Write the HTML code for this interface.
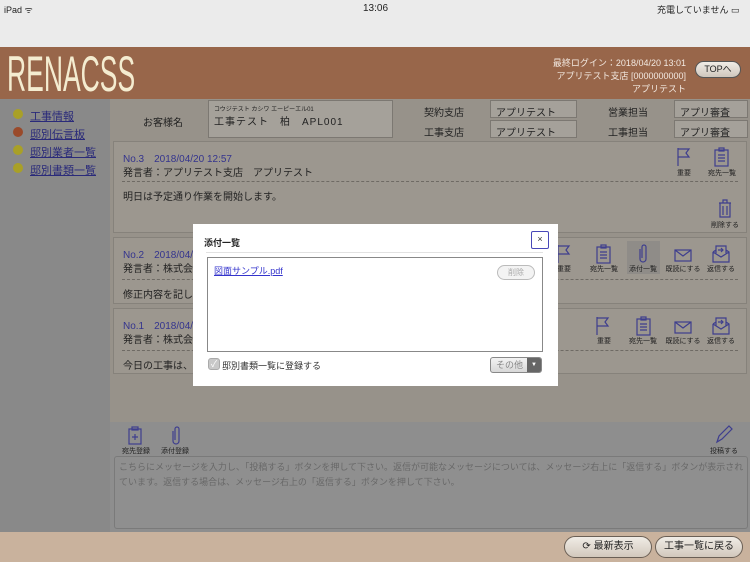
<!DOCTYPE html>
<html style="width:750px;height:562px;overflow:hidden"><head><meta charset="utf-8"><style>
*{margin:0;padding:0;box-sizing:border-box}
body{width:750px;height:562px;position:relative;overflow:hidden;font-family:"Liberation Sans","Noto Sans CJK JP",sans-serif;background:#97928a;color:#222}
.a{position:absolute}
.t{position:absolute;white-space:nowrap}
.card{position:absolute;left:113px;width:634px;border:1px solid #86827b;background:#9c978f}
.dash{position:absolute;left:8px;right:8px;border-top:1px dashed #6e6a64}
.lbl{position:absolute;font-size:7px;color:#222;text-align:center;width:40px}
.fld{position:absolute;background:#a5a19a;border:1px solid #7c7872;font-size:10px;padding:3px 5px;color:#222}
svg{position:absolute;overflow:visible}
.btn{position:absolute;height:22px;border:1px solid #555;border-radius:11px;background:linear-gradient(#e8e8e8,#bdbdbd);font-size:10px;text-align:center;line-height:20px;color:#222}
</style></head><body>
<div class="a" style="left:0;top:0;width:750px;height:47px;background:#ebebeb"></div>
<div class="t" style="left:4px;top:3px;font-size:9px">iPad ᯤ</div>
<div class="t" style="left:363px;top:3px;font-size:10px">13:06</div>
<div class="t" style="left:657px;top:3px;font-size:9px">充電していません ▭</div>
<div class="a" style="left:0;top:47px;width:750px;height:52px;background:#98664a"></div>
<div class="t" style="left:7px;top:49px;font-size:50px;line-height:50px;color:#f4ecd0;transform:scaleX(0.53);transform-origin:left">RENACSS</div>
<div class="t" style="right:64px;top:57px;font-size:9px;color:#f2e8e0;text-align:right;line-height:13px">最終ログイン：2018/04/20 13:01<br>アプリテスト支店 [0000000000]<br>アプリテスト</div>
<div class="btn" style="left:695px;top:61px;width:46px;height:17px;line-height:15px;font-size:9px;background:linear-gradient(#f0ece6,#cfc6bc)">TOPへ</div>
<div class="a" style="left:0;top:99px;width:110px;height:433px;background:#898989"></div>
<div class="a" style="left:13px;top:109px;width:10px;height:10px;border-radius:50%;background:#a9a027"></div>
<div class="a" style="left:13px;top:127px;width:10px;height:10px;border-radius:50%;background:#9a4a2a"></div>
<div class="a" style="left:13px;top:145px;width:10px;height:10px;border-radius:50%;background:#a9a027"></div>
<div class="a" style="left:13px;top:163px;width:10px;height:10px;border-radius:50%;background:#a9a027"></div>
<div class="t" style="left:30px;top:108px;font-size:11px;color:#2a2a7a;text-decoration:underline;line-height:18px">工事情報<br>邸別伝言板<br>邸別業者一覧<br>邸別書類一覧</div>
<div class="t" style="left:143px;top:114px;font-size:10px">お客様名</div>
<div class="fld" style="left:208px;top:100px;width:185px;height:38px;padding-top:3px"><div style="font-size:6px">コウジテスト カシワ エーピーエル01</div><div style="letter-spacing:1px">工事テスト　柏　APL001</div></div>
<div class="t" style="left:424px;top:104px;font-size:10px">契約支店</div>
<div class="t" style="left:424px;top:124px;font-size:10px">工事支店</div>
<div class="fld" style="left:490px;top:100px;width:87px;height:18px">アプリテスト</div>
<div class="fld" style="left:490px;top:120px;width:87px;height:18px">アプリテスト</div>
<div class="t" style="left:608px;top:104px;font-size:10px">営業担当</div>
<div class="t" style="left:608px;top:124px;font-size:10px">工事担当</div>
<div class="fld" style="left:674px;top:100px;width:74px;height:18px">アプリ審査</div>
<div class="fld" style="left:674px;top:120px;width:74px;height:18px">アプリ審査</div>

<svg width="0" height="0"><defs>
<g id="flag" fill="none" stroke="#3e3e8e" stroke-width="1.2"><path d="M0 0V18M0 1H11L8 5L11 9H0"/></g>
<g id="clip" fill="none" stroke="#3e3e8e" stroke-width="1.2"><rect x="0" y="2" width="13" height="16"/><rect x="4" y="0" width="5" height="3"/><path d="M3 7H10M3 10H10M3 13H10"/></g>
<g id="pclip" fill="none" stroke="#3e3e8e" stroke-width="1.2"><path d="M3 5V15A3 3 0 0 0 9 15V3A2 2 0 0 0 5 3V14"/></g>
<g id="env" fill="none" stroke="#3e3e8e" stroke-width="1.2"><rect x="0" y="0" width="16" height="11"/><path d="M0 0L8 6L16 0"/></g>
<g id="rep" fill="none" stroke="#3e3e8e" stroke-width="1.2"><path d="M0 7V17H16V7L13 5M0 7L3 5M0 7L8 12L16 7M3 9V1H13V9M5 5H10M8 3L10 5L8 7"/></g>
<g id="trash" fill="none" stroke="#3e3e8e" stroke-width="1.2"><path d="M0 3H12M4 3V0H8V3M1 3V17H11V3M4 6V15M8 6V15"/></g>
</defs></svg>

<div class="card" style="top:141px;height:92px">
<div class="t" style="left:9px;top:8px;font-size:10px;color:#34348e">No.3　2018/04/20 12:57</div>
<div class="t" style="left:9px;top:22px;font-size:10px">発言者：アプリテスト支店　アプリテスト</div>
<div class="dash" style="top:39px"></div>
<div class="t" style="left:9px;top:46px;font-size:10px">明日は予定通り作業を開始します。</div>
</div>
<svg style="left:678px;top:148px"><use href="#flag"/></svg><div class="lbl" style="left:664px;top:168px">重要</div>
<svg style="left:715px;top:148px"><use href="#clip"/></svg><div class="lbl" style="left:702px;top:168px">宛先一覧</div>
<svg style="left:719px;top:200px"><use href="#trash"/></svg><div class="lbl" style="left:705px;top:220px">削除する</div>

<div class="card" style="top:237px;height:67px">
<div class="t" style="left:9px;top:8px;font-size:10px;color:#34348e">No.2　2018/04/20 12:50</div>
<div class="t" style="left:9px;top:22px;font-size:10px">発言者：株式会社</div>
<div class="dash" style="top:41px"></div>
<div class="t" style="left:9px;top:48px;font-size:10px">修正内容を記した</div>
</div>
<div class="a" style="left:627px;top:241px;width:33px;height:33px;background:#8f8c88"></div>
<svg style="left:558px;top:245px"><use href="#flag"/></svg><div class="lbl" style="left:544px;top:264px">重要</div>
<svg style="left:597px;top:245px"><use href="#clip"/></svg><div class="lbl" style="left:584px;top:264px">宛先一覧</div>
<svg style="left:637px;top:244px"><use href="#pclip"/></svg><div class="lbl" style="left:623px;top:264px">添付一覧</div>
<svg style="left:675px;top:250px"><use href="#env"/></svg><div class="lbl" style="left:663px;top:264px">既読にする</div>
<svg style="left:713px;top:245px"><use href="#rep"/></svg><div class="lbl" style="left:701px;top:264px">返信する</div>

<div class="card" style="top:308px;height:66px">
<div class="t" style="left:9px;top:8px;font-size:10px;color:#34348e">No.1　2018/04/20 12:45</div>
<div class="t" style="left:9px;top:22px;font-size:10px">発言者：株式会社</div>
<div class="dash" style="top:41px"></div>
<div class="t" style="left:9px;top:48px;font-size:10px">今日の工事は、雨</div>
</div>
<svg style="left:597px;top:317px"><use href="#flag"/></svg><div class="lbl" style="left:584px;top:336px">重要</div>
<svg style="left:637px;top:317px"><use href="#clip"/></svg><div class="lbl" style="left:623px;top:336px">宛先一覧</div>
<svg style="left:675px;top:322px"><use href="#env"/></svg><div class="lbl" style="left:663px;top:336px">既読にする</div>
<svg style="left:713px;top:317px"><use href="#rep"/></svg><div class="lbl" style="left:701px;top:336px">返信する</div>

<div class="a" style="left:110px;top:422px;width:640px;height:110px;background:#8e8e8e"></div>
<svg style="left:129px;top:427px"><g fill="none" stroke="#3e3e8e" stroke-width="1.2"><rect x="0" y="2" width="12" height="15"/><rect x="3" y="0" width="6" height="3"/><path d="M6 7V13M3 10H9"/></g></svg>
<div class="lbl" style="left:116px;top:446px">宛先登録</div>
<svg style="left:170px;top:426px"><use href="#pclip"/></svg><div class="lbl" style="left:155px;top:446px">添付登録</div>
<svg style="left:716px;top:426px"><g fill="none" stroke="#3e3e8e" stroke-width="1.2"><path d="M1 16L3 10L13 0L16 3L6 13Z"/></g></svg>
<div class="lbl" style="left:704px;top:446px">投稿する</div>
<div class="a" style="left:114px;top:456px;width:634px;height:73px;background:#8f8f8f;border:1px solid #7a7a7a;border-radius:3px"></div>
<div class="t" style="left:119px;top:460px;font-size:9px;color:#686868;line-height:15px;white-space:normal;width:625px">こちらにメッセージを入力し、「投稿する」ボタンを押して下さい。返信が可能なメッセージについては、メッセージ右上に「返信する」ボタンが表示されています。返信する場合は、メッセージ右上の「返信する」ボタンを押して下さい。</div>

<div class="a" style="left:0;top:532px;width:750px;height:30px;background:#c9b29d"></div>
<div class="btn" style="left:564px;top:536px;width:88px;background:linear-gradient(#f0ece6,#d2c8bc);border-color:#6a5f55">⟳ 最新表示</div>
<div class="btn" style="left:655px;top:536px;width:88px;background:linear-gradient(#f0ece6,#d2c8bc);border-color:#6a5f55">工事一覧に戻る</div>

<div class="a" style="left:193px;top:224px;width:365px;height:162px;background:#fff"></div>
<div class="t" style="left:204px;top:236px;font-size:9px;font-weight:bold">添付一覧</div>
<div class="a" style="left:531px;top:231px;width:18px;height:18px;border:1px solid #4848b8;border-radius:2px;font-size:9px;text-align:center;line-height:15px;color:#333">×</div>
<div class="a" style="left:206px;top:252px;width:337px;border-top:1px solid #e2e2e2"></div>
<div class="a" style="left:207px;top:257px;width:336px;height:95px;border:1px solid #888"></div>
<div class="t" style="left:214px;top:264px;font-size:9px;color:#3333cc;text-decoration:underline">図面サンプル.pdf</div>
<div class="a" style="left:497px;top:265px;width:38px;height:15px;border:1px solid #bbb;border-radius:8px;background:#f3f3f3;font-size:8px;color:#aaa;text-align:center;line-height:13px">削除</div>
<div class="a" style="left:208px;top:358px;width:12px;height:12px;border-radius:3px;background:#c8c8c8;border:1px solid #aaa;font-size:9px;color:#fff;text-align:center;line-height:10px">✓</div>
<div class="t" style="left:222px;top:359px;font-size:9px;color:#333">邸別書類一覧に登録する</div>
<div class="a" style="left:490px;top:357px;width:52px;height:16px;border:1px solid #888;border-radius:3px;background:linear-gradient(#f2f2f2,#d8d8d8);font-size:9px;color:#888;line-height:14px;padding-left:5px">その他</div>
<div class="a" style="left:527px;top:358px;width:14px;height:14px;background:#666;border-radius:0 2px 2px 0;color:#fff;font-size:6px;text-align:center;line-height:14px">▼</div>
</body></html>
